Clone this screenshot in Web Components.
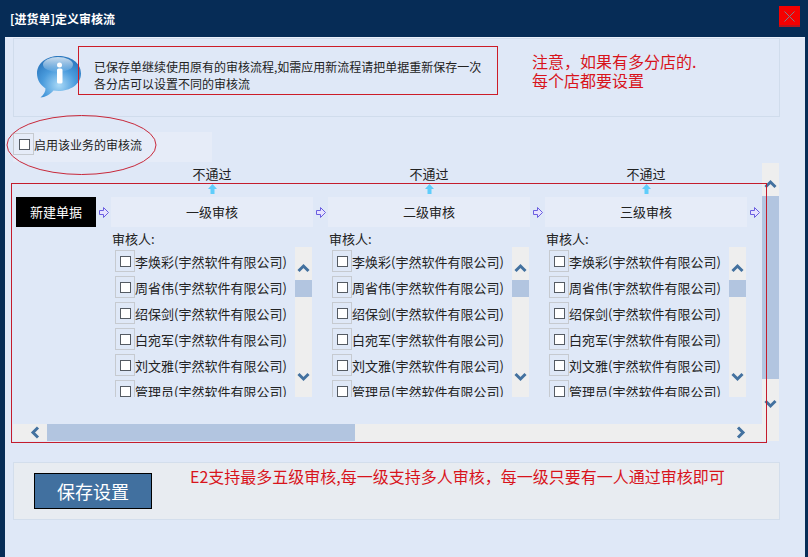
<!DOCTYPE html>
<html lang="zh"><head><meta charset="utf-8"><title>定义审核流</title>
<style>
html,body{margin:0;padding:0;height:100%;background:#062c56}
body{font-family:"Noto Sans CJK SC","Liberation Sans",sans-serif;font-size:13px;color:#111;overflow:hidden}
</style></head><body>
<approval-app></approval-app>
<script>
const FONT='"Noto Sans CJK SC","Liberation Sans",sans-serif';
const chev={
 up:'<polyline points="1.5,8 6.5,3 11.5,8"/>',
 down:'<polyline points="1.5,2 6.5,7 11.5,2"/>',
 left:'<polyline points="8,1.5 3,6.5 8,11.5"/>',
 right:'<polyline points="2,1.5 7,6.5 2,11.5"/>'};
const chevSvg=d=>`<svg width="${d==='up'||d==='down'?13:10}" height="${d==='up'||d==='down'?10:13}" viewBox="0 0 ${d==='up'||d==='down'?'13 10':'10 13'}" fill="none" stroke="#43719f" stroke-width="3">${chev[d]}</svg>`;

class ScrollBar extends HTMLElement{
 connectedCallback(){
  const h=this.getAttribute('orient')==='h';
  const before=+this.getAttribute('before')||33,size=+this.getAttribute('thumb')||17;
  const a=h?'left':'up',b=h?'right':'down';
  this.attachShadow({mode:'open'}).innerHTML=`<style>
  :host{display:flex;flex-direction:${h?'row':'column'};background:#eeeeee;${h?'height:17px':'width:17px'};flex:none}
  .btn{display:flex;flex:none;${h?'width:33px;height:17px;align-items:center':'height:33px;width:17px;justify-content:center'}}
  .a{${h?'justify-content:flex-start;padding-left:17px;box-sizing:border-box':'align-items:flex-end;padding-bottom:7px;box-sizing:border-box'}}
  .b{${h?'justify-content:flex-end;padding-right:16px;box-sizing:border-box':'align-items:flex-start;padding-top:8px;box-sizing:border-box'}}
  .thumb{background:#b2c5e0;flex:none;${h?`width:${size}px`:`height:${size}px`}}
  .sp{flex:1}
  </style><div class="btn a" style="${h?'width:'+before+'px':''}">${chevSvg(a)}</div><div class="thumb"></div><div class="sp"></div><div class="btn b">${chevSvg(b)}</div>`;
 }
}
customElements.define('scroll-bar',ScrollBar);

class CheckBox extends HTMLElement{
 constructor(){super();this.attachShadow({mode:'open'}).innerHTML=`<style>
  :host{display:flex;box-sizing:border-box;width:20px;height:22px;border:1px solid #c6cad0;padding:5px 0 0 4px;flex:none}
  i{display:block;box-sizing:border-box;width:11px;height:11px;background:#fff;border:1px solid #555b63}
  </style><i></i>`;}
}
customElements.define('check-box',CheckBox);

class TitleBar extends HTMLElement{
 constructor(){super();this.attachShadow({mode:'open'}).innerHTML=`<style>
  :host{display:flex;height:37px;box-sizing:border-box;padding:6px 8px 0 10px;justify-content:space-between;background:#062c56;flex:none}
  .t{color:#fff;font:bold 12px/26px ${FONT}}
  .x{width:21px;height:21px;background:#f50000;box-shadow:inset 0 -2px 0 #b8141c;display:flex;align-items:center;justify-content:center}
  </style><div class="t"><slot></slot></div><div class="x"><svg width="11" height="11" viewBox="0 0 11 11" stroke="#7b7f8c" stroke-width="1"><path d="M.5 .5L10.500 10.500M10.500 .5L.5 10.500"/></svg></div>`;}
}
customElements.define('title-bar',TitleBar);

class InfoPanel extends HTMLElement{
 constructor(){super();this.attachShadow({mode:'open'}).innerHTML=`<style>
  :host{display:flex;box-sizing:border-box;height:79px;border:1px solid #d0dcec;background:#dfe8f7;padding:0 0 0 23px;flex:none}
  svg{flex:none;margin-top:16px;width:48px;height:44px}
  .msg{width:438px;flex:none;margin-left:9px;padding-top:19px;font:12px/17px ${FONT};color:#222;white-space:pre-line}
  .note{padding-top:13px;font:16px/19px ${FONT};color:#d8141c;white-space:pre-line}
  </style>
  <svg viewBox="0 0 48 44"><defs><radialGradient id="g" cx="50%" cy="70%" r="70%"><stop offset="0" stop-color="#a9d9f7"/><stop offset=".55" stop-color="#4a9bdc"/><stop offset="1" stop-color="#2a76bd"/></radialGradient><linearGradient id="s" x1="0" y1="0" x2="0" y2="1"><stop offset="0" stop-color="#fff" stop-opacity=".75"/><stop offset="1" stop-color="#fff" stop-opacity=".05"/></linearGradient></defs>
  <path d="M21.5 1C33.5 1 44 7.500 44 18.500C44 29.500 33 36 21.500 36C19.500 36 18 35.800 16.500 35.500C13 39.500 8 42.500 3.500 42.500C7 39.500 8.500 36.500 8.500 33.500C3.500 30 0 25 0 18.500C0 8 10 1 21.500 1Z" fill="url(#g)"/>
  <ellipse cx="21" cy="9.500" rx="15" ry="7.500" fill="url(#s)"/>
  <circle cx="22.500" cy="10" r="2.500" fill="#fff"/><rect x="20" y="13.500" width="5.500" height="15" rx="1.500" fill="#fff"/></svg>
  <div class="msg"><slot name="msg"></slot></div><div class="note"><slot name="note"></slot></div>`;}
}
customElements.define('info-panel',InfoPanel);

class EnableRow extends HTMLElement{
 constructor(){super();this.attachShadow({mode:'open'}).innerHTML=`<style>
  :host{display:flex;box-sizing:border-box;width:199px;height:30px;margin-top:15px;align-items:flex-start;background:#e6ecf8;font:12px/17px ${FONT};color:#222;flex:none}
  check-box{width:21px;padding-left:5px;margin-top:1px}
  .t{margin-top:4px}
  </style><check-box></check-box><span class="t"><slot></slot></span>`;}
}
customElements.define('enable-row',EnableRow);

const ARROW=`<svg width="10" height="11" viewBox="0 0 10 11"><path d="M.5 3.500H4.500V.5L9.500 5.500L4.500 10.500V7.500H.5Z" fill="#e6e2ff" stroke="#6a5ee0" stroke-width="1"/></svg>`;

class ApproverList extends HTMLElement{
 connectedCallback(){
  const names=['李焕彩','周省伟','绍保剑','白宛军','刘文雅','管理员'];
  this.attachShadow({mode:'open'}).innerHTML=`<style>
  :host{display:flex;height:150px;width:201px;flex:none}
  .rows{flex:none;width:184px;overflow:hidden;padding:3px 0 0 4px;box-sizing:border-box}
  .row{display:flex;align-items:center;height:22px;margin-bottom:4px;font:13px/22px ${FONT};color:#222;white-space:nowrap}
  .row span{margin-top:2px}
  </style><div class="rows">${names.map(n=>`<div class="row"><check-box></check-box><span>${n}(宇然软件有限公司)</span></div>`).join('')}</div>
  <scroll-bar thumb="17"></scroll-bar>`;
 }
}
customElements.define('approver-list',ApproverList);

class FlowStep extends HTMLElement{
 connectedCallback(){
  const t=this.getAttribute('title');
  this.attachShadow({mode:'open'}).innerHTML=`<style>
  :host{display:block;width:217px;flex:none;font:13px/20px ${FONT};color:#222}
  .rej{height:34px;width:202px;display:flex;flex-direction:column;align-items:center;padding-top:1px;box-sizing:border-box}
  .rej svg{display:block;margin-top:0}
  .head{display:flex;height:30px}
  .name{width:202px;background:#e6ecf8;text-align:center;line-height:30px}
  .arr{width:15px;padding:10px 0 0 3px;box-sizing:border-box}
  .arr svg{display:block}
  .lbl{padding:3px 0 0 1px;height:20px;line-height:18px;box-sizing:border-box}
  </style>
  <div class="rej"><span>不通过</span><svg width="9" height="10" viewBox="0 0 9 10"><path d="M4.500 0L9 5H6.500V10H2.500V5H0Z" fill="#5fcdfb"/></svg></div>
  <div class="head"><div class="name">${t}</div><div class="arr">${ARROW}</div></div>
  <div class="lbl">审核人:</div>
  <approver-list></approver-list>`;
 }
}
customElements.define('flow-step',FlowStep);

class FlowArea extends HTMLElement{
 constructor(){super();this.attachShadow({mode:'open'}).innerHTML=`<style>
  :host{display:grid;grid-template-columns:749px 17px;grid-template-rows:261px 17px;width:766px;flex:none;margin-top:1px;background:#dfe8f7}
  .view{overflow:hidden;display:flex;padding-left:3px;box-sizing:border-box}
  .start{flex:none;margin-top:34px;width:80px;height:30px;background:#000;color:#fff;font:13px/30px ${FONT};text-align:center}
  .arr{flex:none;width:15px;height:30px;margin-top:34px;padding:10px 0 0 3px;box-sizing:border-box}
  .arr svg{display:block}
  .corner{background:#eee}
  </style>
  <div class="view"><div class="start">新建单据</div><div class="arr">${ARROW}</div><slot></slot></div>
  <scroll-bar thumb="183"></scroll-bar>
  <scroll-bar orient="h" before="34" thumb="308"></scroll-bar>
  <div class="corner"></div>`;}
}
customElements.define('flow-area',FlowArea);

class SavePanel extends HTMLElement{
 constructor(){super();this.attachShadow({mode:'open'}).innerHTML=`<style>
  :host{display:flex;box-sizing:border-box;height:58px;margin-top:21px;border:1px solid #d3deec;background:#e8ecf1;padding:10px 0 0 20px;flex:none}
  button{all:unset;box-sizing:border-box;display:block;width:118px;height:36px;background:#41709f;border:1px solid #000;color:#fff;text-align:center;font:18px/33px ${FONT}}
  .n{margin-left:38px;margin-top:-9px;font:16px/24px ${FONT};color:#d8141c;white-space:nowrap}
  </style><button><slot name="btn"></slot></button><div class="n"><slot name="note"></slot></div>`;}
}
customElements.define('save-panel',SavePanel);

class ApprovalApp extends HTMLElement{
 constructor(){super();this.attachShadow({mode:'open'}).innerHTML=`<style>
  :host{display:flex;flex-direction:column;width:808px;height:557px;position:relative;background:#062c56;font:13px ${FONT}}
  .body{flex:1;margin:0 3px 0 5px;background:#dfe8f7;padding:0 25px 0 8px;display:flex;flex-direction:column;border-top:1px solid #eaf0fb}
  .box{position:absolute;left:78px;top:46px;width:420px;height:49px;box-sizing:border-box;border:1px solid #cc1c28;pointer-events:none}
  .big{position:absolute;left:11px;top:183px;width:756px;height:260px;box-sizing:border-box;border:1px solid #c41c2c;pointer-events:none}
  .oval{position:absolute;left:6px;top:114px;pointer-events:none}
  </style>
  <title-bar>[进货单]定义审核流</title-bar>
  <div class="body">
   <info-panel>
    <span slot="msg">已保存单继续使用原有的审核流程,如需应用新流程请把单据重新保存一次
各分店可以设置不同的审核流</span>
    <span slot="note">注意，如果有多分店的.
每个店都要设置</span>
   </info-panel>
   <enable-row>启用该业务的审核流</enable-row>
   <flow-area>
    <flow-step title="一级审核"></flow-step>
    <flow-step title="二级审核"></flow-step>
    <flow-step title="三级审核"></flow-step>
   </flow-area>
   <save-panel><span slot="btn">保存设置</span><span slot="note">E2支持最多五级审核,每一级支持多人审核，每一级只要有一人通过审核即可</span></save-panel>
  </div>
  <div class="box"></div><div class="big"></div>
  <svg class="oval" width="152" height="63" viewBox="0 0 152 63"><ellipse cx="75.500" cy="31" rx="74.500" ry="29.500" fill="none" stroke="#c8283a" stroke-width="1"/></svg>`;}
}
customElements.define('approval-app',ApprovalApp);
</script></body></html>
